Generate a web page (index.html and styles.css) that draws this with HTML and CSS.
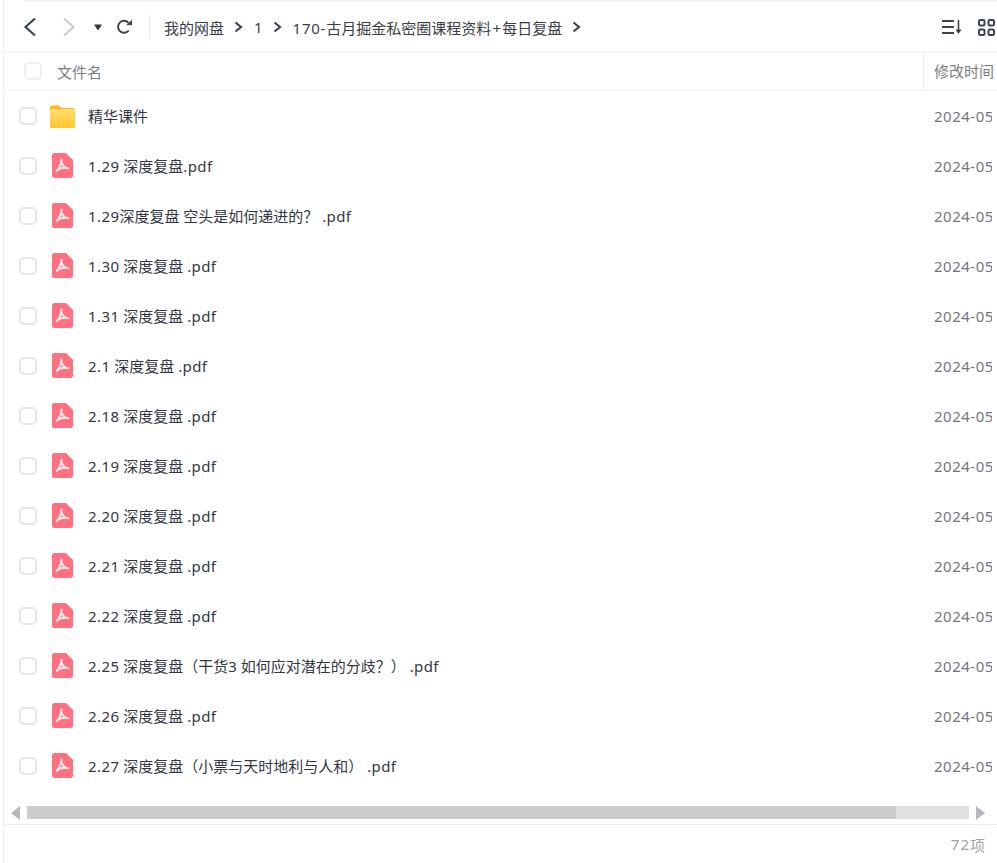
FILE: index.html
```html
<!DOCTYPE html>
<html lang="zh">
<head>
<meta charset="utf-8">
<title>我的网盘</title>
<link rel="stylesheet" href="styles.css">
</head>
<body>
<svg class="defs" width="0" height="0">
  <defs>
    <linearGradient id="folder-front" x1="0" y1="0" x2="0" y2="1">
      <stop offset="0" stop-color="#ffdf70"/>
      <stop offset="1" stop-color="#ffc62e"/>
    </linearGradient>
  </defs>
  <symbol id="pdf" viewBox="0 0 21 25">
    <path d="M2.5 0H14L21 7V22.500A2.500 2.500 0 0 1 18.500 25H2.500A2.500 2.500 0 0 1 0 22.500V2.500A2.500 2.500 0 0 1 2.500 0Z" fill="#ff7080"/>
    <path d="M9.500 6.500C9.300 10 7.800 14.700 4.800 18M9.800 10C10.800 12.800 12.800 15 16.300 15.300C13.300 14.300 9 14.900 5.800 16.800" fill="none" stroke="#fff" stroke-opacity=".85" stroke-width="2.100" stroke-linecap="round" stroke-linejoin="round"/>
  </symbol>
</svg>
<div class="app">
  <div class="topline"></div>
  <div class="toolbar">
    <svg class="nav back" width="14" height="20" viewBox="0 0 14 20"><path d="M12 1.500L2.500 10l9.500 8.500" fill="none" stroke="#3c4352" stroke-width="2.200"/></svg>
    <svg class="nav forward" width="14" height="20" viewBox="0 0 14 20"><path d="M2 1.500L11.500 10 2 18.500" fill="none" stroke="#c8cacf" stroke-width="2"/></svg>
    <svg class="caret" width="8" height="7" viewBox="0 0 8 7"><path d="M0 .5H8L4 6.500Z" fill="#2d3240"/></svg>
    <svg class="refresh" width="17" height="16" viewBox="0 0 17 16"><path d="M12.800 11.500A6 6 0 1 1 12.500 3.800" fill="none" stroke="#3c4352" stroke-width="2"/><path d="M10.300 5.900L16 6.200V.8Z" fill="#3c4352"/></svg>
    <span class="divider"></span>
    <nav class="crumbs">
      <span>我的网盘</span><svg class="sep" width="9" height="12" viewBox="0 0 9 12"><path d="M1.500 1.500L7 6l-5.500 4.500" fill="none" stroke="#3c4352" stroke-width="2.200"/></svg>
      <span>1</span><svg class="sep" width="9" height="12" viewBox="0 0 9 12"><path d="M1.500 1.500L7 6l-5.500 4.500" fill="none" stroke="#3c4352" stroke-width="2.200"/></svg>
      <span><span class="wide">170-</span>古月掘金私密圈课程资料<span class="plus">+</span>每日复盘</span><svg class="sep" width="9" height="12" viewBox="0 0 9 12"><path d="M1.500 1.500L7 6l-5.500 4.500" fill="none" stroke="#3c4352" stroke-width="2.200"/></svg>
    </nav>
    <div class="views">
      <svg width="21" height="16" viewBox="0 0 21 16"><path d="M0 2H12M0 8H12M0 14H12" stroke="#3c4352" stroke-width="2"/><path d="M16.500 1V13" stroke="#3c4352" stroke-width="1.600"/><path d="M13.500 10.500H19.500L16.500 15Z" fill="#3c4352"/></svg>
      <svg width="17" height="17" viewBox="0 0 17 17"><g fill="none" stroke="#3c4352" stroke-width="2"><rect x="1" y="1" width="5.500" height="5.500" rx="1.300"/><rect x="10.500" y="1" width="5.500" height="5.500" rx="1.300"/><rect x="1" y="10.500" width="5.500" height="5.500" rx="1.300"/><rect x="10.500" y="10.500" width="5.500" height="5.500" rx="1.300"/></g></svg>
    </div>
  </div>
  <div class="head">
    <span class="check check-head"></span>
    <span class="head-name">文件名</span>
    <span class="head-time">修改时间</span>
  </div>
  <div class="list">
    <div class="row"><span class="check"></span><span class="icon"><svg width="25" height="23" viewBox="0 0 25 23"><path d="M0 2.500A2 2 0 0 1 2 .5H9L11.500 3H23A2 2 0 0 1 25 5V21A2 2 0 0 1 23 23H2A2 2 0 0 1 0 21Z" fill="#fdb720"/><rect y="4" width="25" height="19" rx="2" fill="url(#folder-front)"/></svg></span><span class="name">精华课件</span><span class="time">2024-05</span></div>
    <div class="row"><span class="check"></span><span class="icon"><svg class="pdf" width="21" height="25"><use href="#pdf"/></svg></span><span class="name"><span class="lat">1.29</span> 深度复盘<span class="lat">.pdf</span></span><span class="time">2024-05</span></div>
    <div class="row"><span class="check"></span><span class="icon"><svg class="pdf" width="21" height="25"><use href="#pdf"/></svg></span><span class="name"><span class="lat">1.29</span>深度复盘 空头是如何递进的？ <span class="lat">.pdf</span></span><span class="time">2024-05</span></div>
    <div class="row"><span class="check"></span><span class="icon"><svg class="pdf" width="21" height="25"><use href="#pdf"/></svg></span><span class="name"><span class="lat">1.30</span> 深度复盘 <span class="lat">.pdf</span></span><span class="time">2024-05</span></div>
    <div class="row"><span class="check"></span><span class="icon"><svg class="pdf" width="21" height="25"><use href="#pdf"/></svg></span><span class="name"><span class="lat">1.31</span> 深度复盘 <span class="lat">.pdf</span></span><span class="time">2024-05</span></div>
    <div class="row"><span class="check"></span><span class="icon"><svg class="pdf" width="21" height="25"><use href="#pdf"/></svg></span><span class="name"><span class="lat">2.1</span> 深度复盘 <span class="lat">.pdf</span></span><span class="time">2024-05</span></div>
    <div class="row"><span class="check"></span><span class="icon"><svg class="pdf" width="21" height="25"><use href="#pdf"/></svg></span><span class="name"><span class="lat">2.18</span> 深度复盘 <span class="lat">.pdf</span></span><span class="time">2024-05</span></div>
    <div class="row"><span class="check"></span><span class="icon"><svg class="pdf" width="21" height="25"><use href="#pdf"/></svg></span><span class="name"><span class="lat">2.19</span> 深度复盘 <span class="lat">.pdf</span></span><span class="time">2024-05</span></div>
    <div class="row"><span class="check"></span><span class="icon"><svg class="pdf" width="21" height="25"><use href="#pdf"/></svg></span><span class="name"><span class="lat">2.20</span> 深度复盘 <span class="lat">.pdf</span></span><span class="time">2024-05</span></div>
    <div class="row"><span class="check"></span><span class="icon"><svg class="pdf" width="21" height="25"><use href="#pdf"/></svg></span><span class="name"><span class="lat">2.21</span> 深度复盘 <span class="lat">.pdf</span></span><span class="time">2024-05</span></div>
    <div class="row"><span class="check"></span><span class="icon"><svg class="pdf" width="21" height="25"><use href="#pdf"/></svg></span><span class="name"><span class="lat">2.22</span> 深度复盘 <span class="lat">.pdf</span></span><span class="time">2024-05</span></div>
    <div class="row"><span class="check"></span><span class="icon"><svg class="pdf" width="21" height="25"><use href="#pdf"/></svg></span><span class="name"><span class="lat">2.25</span> 深度复盘（干货3 如何应对潜在的分歧？） <span class="lat">.pdf</span></span><span class="time">2024-05</span></div>
    <div class="row"><span class="check"></span><span class="icon"><svg class="pdf" width="21" height="25"><use href="#pdf"/></svg></span><span class="name"><span class="lat">2.26</span> 深度复盘 <span class="lat">.pdf</span></span><span class="time">2024-05</span></div>
    <div class="row"><span class="check"></span><span class="icon"><svg class="pdf" width="21" height="25"><use href="#pdf"/></svg></span><span class="name"><span class="lat">2.27</span> 深度复盘（小票与天时地利与人和） <span class="lat">.pdf</span></span><span class="time">2024-05</span></div>
  </div>
  <div class="scrollbar">
    <span class="arrow arrow-left"></span>
    <div class="track"><div class="thumb"></div></div>
    <span class="arrow arrow-right"></span>
  </div>
  <div class="footer"><span class="count">72</span>项</div>
</div>
</body>
</html>
```
FILE: styles.css
```css
* { box-sizing: border-box; }
html, body { margin: 0; height: 100%; background: #fff; }
body { overflow: hidden; font-family: "Noto Sans", "Noto Sans CJK SC", sans-serif; font-size: 15px; color: #3a3d48; }
.defs { display: block; height: 0; }
.app { margin-left: 3px; height: 863px; border-left: 1px solid #eeeff2; display: flex; flex-direction: column; }
.topline { height: 3px; margin-left: 20px; border-top: 2px solid #f2f3f5; }
.toolbar { height: 50px; display: flex; align-items: center; border-bottom: 2px solid #f7f7f9; padding-left: 19px; }
.nav { flex: none; }
.forward { margin-left: 25px; }
.caret { margin-left: 18px; }
.refresh { margin-left: 14px; }
.divider { width: 1px; height: 24px; background: #e9eaed; margin-left: 16px; }
.crumbs { display: flex; align-items: center; margin-left: 14px; white-space: nowrap; color: #3a3d48; }
.sep { margin: 0 11px 0 10px; }
.wide { letter-spacing: .75px; }
.plus { margin: 0 1.2px; }
.views { margin-left: auto; display: flex; align-items: center; gap: 15px; padding-right: 2px; }
.head { height: 38px; display: flex; align-items: center; border-bottom: 2px solid #f7f7f9; color: #7b7e87; }
.check { flex: none; width: 18px; height: 18px; border: 2px solid #e2e6ec; border-radius: 5px; background: #fff; }
.check-head { margin-left: 20px; border-color: #eceef0; }
.head-name { margin-left: 15px; }
.head-time { margin-left: auto; width: 74px; height: 100%; padding-left: 10px; line-height: 36px; border-left: 1px solid #eeeff2; white-space: nowrap; overflow: hidden; }
.list { height: 700px; }
.row { height: 50px; display: flex; align-items: center; padding-left: 15px; }
.icon { flex: none; width: 25px; margin-left: 13px; display: flex; justify-content: center; }
.icon svg { display: block; }
.icon .pdf { margin-bottom: 1px; }
.name { margin-left: 13px; margin-bottom: 2px; color: #333744; white-space: pre; }
.lat { letter-spacing: .4px; }
.time { margin-left: auto; width: 58px; margin-right: 5px; color: #73767f; white-space: nowrap; overflow: hidden; letter-spacing: .5px; }
.scrollbar { height: 34px; display: flex; align-items: center; padding: 10px 12px 0 7px; border-bottom: 1px solid #eeeff2; }
.arrow { flex: none; width: 0; height: 0; border-top: 7px solid transparent; border-bottom: 7px solid transparent; }
.arrow-left { border-right: 9px solid #b4b8bd; }
.arrow-right { border-left: 9px solid #b4b8bd; }
.track { flex: 1; height: 13px; margin: 0 7px; background: #e0e0e0; }
.thumb { width: 869px; height: 100%; background: #cbcccd; }
.footer { flex: 1; display: flex; justify-content: flex-end; align-items: center; padding: 0 12px 0 0; color: #a0a2a8; }
.count { letter-spacing: 1px; }
```
